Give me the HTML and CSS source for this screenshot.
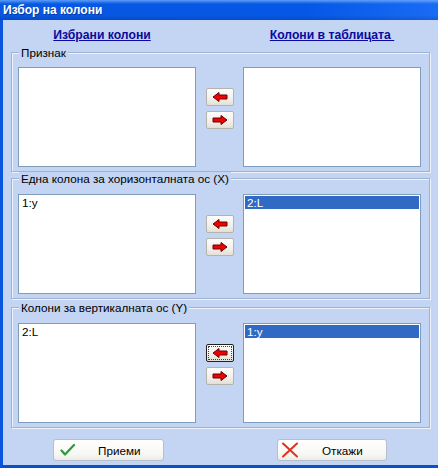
FILE: index.html
```html
<!DOCTYPE html>
<html>
<head>
<meta charset="utf-8">
<link rel="stylesheet" href="styles.css">
</head>
<body>
<div class="window">
  <div class="titlebar"><span class="title">Избор на колони</span></div>
  <div class="client">
    <div class="headers">
      <a class="hdr hdr-left">Избрани колони</a>
      <span></span>
      <a class="hdr hdr-right">Колони в таблицата&nbsp;</a>
    </div>

    <div class="group g1">
      <span class="legend">Признак</span>
      <div class="row">
        <div class="list"></div>
        <div class="arrows">
          <button class="abtn"><svg width="16" height="10" viewBox="0 0 16 10"><polygon points="1,5 7,0.5 7,3 15,3 15,7 7,7 7,9.5" fill="#f00000" stroke="#6a0000" stroke-width="1"/></svg></button>
          <button class="abtn"><svg width="16" height="10" viewBox="0 0 16 10"><polygon points="15,5 9,0.5 9,3 1,3 1,7 9,7 9,9.5" fill="#f00000" stroke="#6a0000" stroke-width="1"/></svg></button>
        </div>
        <div class="list"></div>
      </div>
    </div>

    <div class="group g2">
      <span class="legend">Една колона за хоризонталната ос (X)</span>
      <div class="row">
        <div class="list"><div class="item">1:y</div></div>
        <div class="arrows">
          <button class="abtn"><svg width="16" height="10" viewBox="0 0 16 10"><polygon points="1,5 7,0.5 7,3 15,3 15,7 7,7 7,9.5" fill="#f00000" stroke="#6a0000" stroke-width="1"/></svg></button>
          <button class="abtn"><svg width="16" height="10" viewBox="0 0 16 10"><polygon points="15,5 9,0.5 9,3 1,3 1,7 9,7 9,9.5" fill="#f00000" stroke="#6a0000" stroke-width="1"/></svg></button>
        </div>
        <div class="list"><div class="item sel">2:L</div></div>
      </div>
    </div>

    <div class="group g3">
      <span class="legend">Колони за вертикалната ос (Y)</span>
      <div class="row">
        <div class="list"><div class="item">2:L</div></div>
        <div class="arrows">
          <button class="abtn focused"><span class="focus"><svg width="16" height="10" viewBox="0 0 16 10"><polygon points="1,5 7,0.5 7,3 15,3 15,7 7,7 7,9.5" fill="#f00000" stroke="#6a0000" stroke-width="1"/></svg></span></button>
          <button class="abtn"><svg width="16" height="10" viewBox="0 0 16 10"><polygon points="15,5 9,0.5 9,3 1,3 1,7 9,7 9,9.5" fill="#f00000" stroke="#6a0000" stroke-width="1"/></svg></button>
        </div>
        <div class="list"><div class="item sel">1:y</div></div>
      </div>
    </div>

    <div class="footer">
      <button class="dbtn ok">
        <svg class="dicon" width="16" height="14" viewBox="0 0 16 14"><path d="M1.5 7.5 L5 11.5 L14 2" fill="none" stroke="#2a9a3a" stroke-width="2.2" stroke-linecap="round" stroke-linejoin="round"/></svg>
        <span class="dtext">Приеми</span>
      </button>
      <button class="dbtn cancel">
        <svg class="dicon" width="18" height="16" viewBox="0 0 18 16"><path d="M2 1.5 L16 14.5 M16 1.5 L2 14.5" fill="none" stroke="#e0301e" stroke-width="2" stroke-linecap="round"/></svg>
        <span class="dtext">Откажи</span>
      </button>
    </div>
  </div>
</div>
</body>
</html>
```

FILE: styles.css
```css
html, body {
  margin: 0;
  padding: 0;
}
body {
  width: 438px;
  height: 468px;
  overflow: hidden;
  font-family: "Liberation Sans", Arial, sans-serif;
  font-size: 11.7px;
  color: #000;
}
.window {
  width: 438px;
  height: 468px;
  display: flex;
  flex-direction: column;
}
.titlebar {
  height: 20px;
  flex: none;
  display: flex;
  align-items: center;
  padding-left: 3px;
  background:
    linear-gradient(to bottom, rgba(120,180,255,0.75) 0, rgba(120,180,255,0) 4px, rgba(0,0,0,0) 15px, rgba(0,20,90,0.18) 20px),
    linear-gradient(to right, #0757e0 0, #0558e6 70%, #1a6cf5 100%);
}
.title {
  color: #fff;
  font-weight: bold;
  font-size: 12px;
  text-shadow: 1px 1px 0 rgba(0,0,60,0.35);
}
.client {
  flex: 1;
  background: #c3d5f2;
  border-left: 3px solid #0a55dd;
  border-bottom: 3px solid #0b4fcf;
  display: flex;
  flex-direction: column;
  padding: 0 8px 0 8px;
}
.headers {
  height: 26px;
  flex: none;
  display: grid;
  grid-template-columns: 178px 47px 178px;
  padding-left: 7px;
  align-items: start;
  padding-top: 9px;
  box-sizing: border-box;
}
.hdr {
  color: #0a0aa0;
  font-weight: bold;
  font-size: 12.2px;
  text-decoration: underline;
  line-height: 13px;
  justify-self: center;
}
.hdr-left {
  margin-right: 10px;
}
.group {
  border: 1px solid #9fb2d2;
  box-shadow: inset 1px 1px 0 #eef3fb, 1px 1px 0 #eef3fb;
  padding: 0 8px 4px 6px;
  display: flex;
  flex-direction: column;
}
.g1 {
  margin-top: 6px;
}
.g2 {
  margin-top: 6px;
}
.g3 {
  margin-top: 8px;
}
.legend {
  display: block;
  width: fit-content;
  margin: -7px 0 0 1px;
  padding: 0 2px;
  background: #c3d5f2;
  line-height: 13px;
  height: 13px;
}
.row {
  display: grid;
  grid-template-columns: 178px 47px 178px;
  margin-top: 8px;
}
.g2 .row, .g3 .row {
  margin-top: 9px;
}
.list {
  height: 100px;
  box-sizing: border-box;
  background: #fff;
  border: 1px solid #7f9db9;
  padding: 1px;
}
.item {
  height: 13px;
  line-height: 13px;
  padding-left: 2px;
}
.item.sel {
  background: #316ac5;
  color: #fff;
}
.arrows {
  display: flex;
  flex-direction: column;
  align-items: center;
  padding-top: 21px;
  gap: 5px;
}
.abtn {
  width: 28px;
  height: 18px;
  padding: 0;
  margin: 0;
  box-sizing: border-box;
  border: 1px solid #b4b4ac;
  border-radius: 2px;
  background: linear-gradient(to bottom, #fdfdfb 0, #f1f0ea 60%, #e2e0d6 100%);
  display: flex;
  align-items: center;
  justify-content: center;
}
.abtn.focused {
  border: 1px solid #202020;
}
.focus {
  display: flex;
  align-items: center;
  justify-content: center;
  width: 22px;
  height: 12px;
  border: 1px dotted #404040;
}
.footer {
  flex: 1;
  display: flex;
  align-items: flex-start;
  padding-top: 11px;
  padding-left: 42px;
}
.dbtn {
  height: 22px;
  box-sizing: border-box;
  border: 1px solid #b8bfcc;
  border-radius: 3px;
  background: linear-gradient(to bottom, #ffffff 0, #f7f7f5 70%, #ebebe6 100%);
  padding: 0;
  margin: 0;
  display: flex;
  align-items: center;
  font-family: "Liberation Sans", Arial, sans-serif;
  font-size: 11.7px;
  color: #000;
}
.ok {
  width: 111px;
  padding-left: 6px;
}
.cancel {
  width: 110px;
  margin-left: 113px;
  padding-left: 3px;
}
.dicon {
  flex: none;
}
.ok .dtext {
  margin-left: 22px;
}
.cancel .dtext {
  margin-left: 23px;
}
```
